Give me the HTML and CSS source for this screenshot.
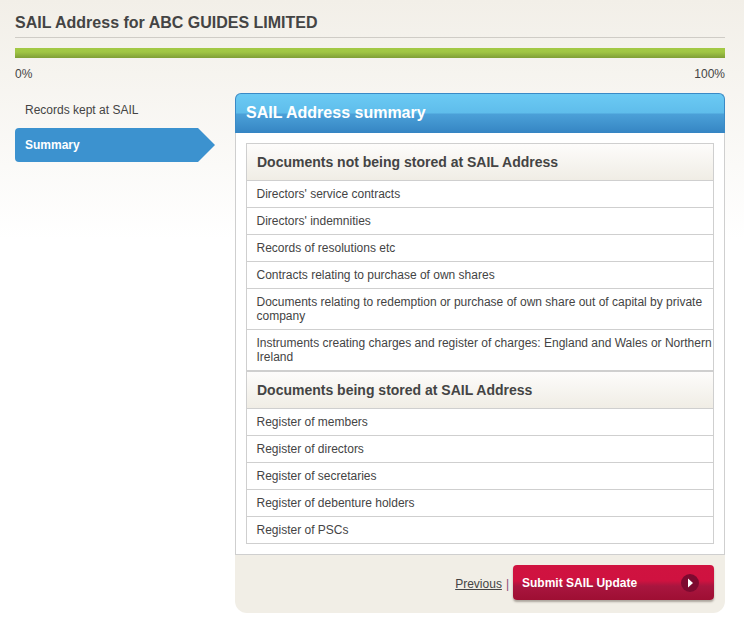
FILE: index.html
```html
<!DOCTYPE html>
<html lang="en">
<head>
<meta charset="utf-8">
<title>SAIL Address</title>
<link rel="stylesheet" href="styles.css">
</head>
<body>
<main class="page">
  <h1 class="title">SAIL Address for ABC GUIDES LIMITED</h1>
  <div class="progress"></div>
  <div class="progress-labels"><span>0%</span><span>100%</span></div>
  <div class="columns">
    <nav class="side">
      <a class="side-link">Records kept at SAIL</a>
      <a class="side-link active">Summary
        <svg class="side-tip" width="18" height="34" viewBox="0 0 18 34"><path d="M0 0H1L18 17L1 34H0Z" fill="#3c92cf"/></svg>
      </a>
    </nav>
    <section class="panel">
      <h2 class="panel-head">SAIL Address summary</h2>
      <div class="panel-body">
        <div class="list">
          <h3 class="list-head">Documents not being stored at SAIL Address</h3>
          <div class="row">Directors' service contracts</div>
          <div class="row">Directors' indemnities</div>
          <div class="row">Records of resolutions etc</div>
          <div class="row">Contracts relating to purchase of own shares</div>
          <div class="row">Documents relating to redemption or purchase of own share out of capital by private company</div>
          <div class="row">Instruments creating charges and register of charges: England and Wales or Northern Ireland</div>
          <h3 class="list-head second">Documents being stored at SAIL Address</h3>
          <div class="row">Register of members</div>
          <div class="row">Register of directors</div>
          <div class="row">Register of secretaries</div>
          <div class="row">Register of debenture holders</div>
          <div class="row last">Register of PSCs</div>
        </div>
      </div>
      <div class="panel-foot">
        <a class="prev">Previous</a><span class="sep">|</span>
        <a class="submit">Submit SAIL Update
          <svg class="submit-icon" width="18" height="18" viewBox="0 0 18 18"><circle cx="9" cy="9" r="9" fill="#7d0a30"/><path d="M7 4.500L12 9L7 13.500Z" fill="#fff"/></svg>
        </a>
      </div>
    </section>
  </div>
</main>
</body>
</html>
```
FILE: styles.css
```css
* { box-sizing: border-box; }
html, body { margin: 0; padding: 0; }
body {
  min-height: 622px;
  background: linear-gradient(#f2efe8 0, #ffffff 240px) no-repeat #fff;
  font-family: "Liberation Sans", Arial, sans-serif;
  font-size: 12px;
  line-height: 14px;
  color: #444;
}
.page { padding: 0 19px 0 15px; }
.title {
  margin: 0;
  height: 38px;
  padding-top: 13px;
  border-bottom: 1px solid #cfccc6;
  font-size: 16px;
  line-height: 19px;
  font-weight: bold;
  color: #444;
}
.progress {
  margin-top: 10px;
  height: 10px;
  background: linear-gradient(#a3c945 0, #a0c644 40%, #7f9f36 100%);
}
.progress-labels {
  display: flex;
  justify-content: space-between;
  margin-top: 9px;
  height: 26px;
}
.columns { display: flex; gap: 0; align-items: flex-start; }
.side { width: 220px; flex: none; padding-top: 0; }
.side-link {
  display: block;
  height: 35px;
  padding: 10px 10px 0;
  color: #444;
}
.side-link.active {
  position: relative;
  width: 182px;
  height: 34px;
  margin-top: 0;
  padding: 10px 10px 0;
  border-radius: 4px 0 0 4px;
  background: #3c92cf;
  color: #fff;
  font-weight: bold;
}
.side-tip { position: absolute; left: 182px; top: 0; }
.panel {
  flex: none;
  width: 490px;
  border-radius: 6px 6px 12px 12px;
  background: #f1eee6;
}
.panel-head {
  margin: 0;
  height: 40px;
  padding: 9px 10px 0;
  border: 1px solid #3a8ac6;
  border-bottom: 0;
  border-radius: 6px 6px 0 0;
  background: linear-gradient(#6bcaf4 0, #5fbdeb 48%, #4ba0d8 52%, #3585c3 100%);
  color: #fff;
  font-size: 16px;
  line-height: 19px;
  font-weight: bold;
}
.panel-body {
  padding: 10px 10px 10px;
  background: #fff;
  border: 1px solid #cfcfcf;
  border-top: 0;
}
.list { border: 1px solid #cfcfcf; border-bottom: 0; }
.list-head {
  margin: 0;
  height: 37px;
  padding: 10px 10px 0;
  border-bottom: 1px solid #cfcfcf;
  background: linear-gradient(#fdfcfb 0, #f0ede5 100%);
  font-size: 14px;
  line-height: 17px;
  font-weight: bold;
  color: #444;
}
.list-head.second { height: 38px; border-top: 1px solid #cfcfcf; padding-top: 10px; }
.row {
  padding: 6px 0 6px 9.5px;
  border-bottom: 1px solid #cfcfcf;
  background: #fff;
}
.panel-foot {
  display: flex;
  align-items: center;
  justify-content: flex-end;
  height: 58px;
  padding: 0 11px 0 0;
}
.prev { color: #444; text-decoration: underline; }
.sep { margin: 0 4px; color: #8a4a78; }
.submit {
  position: relative;
  display: block;
  width: 201px;
  height: 35px;
  margin-top: -3px;
  padding: 11px 0 0 9px;
  border-radius: 4px;
  background: linear-gradient(#d01340 0, #cf1240 45%, #a9163f 60%, #9e0f33 100%);
  box-shadow: 0 2px 2px rgba(90, 80, 70, .45);
  color: #fff;
  font-weight: bold;
}
.submit-icon { position: absolute; right: 15px; top: 9px; }
```
